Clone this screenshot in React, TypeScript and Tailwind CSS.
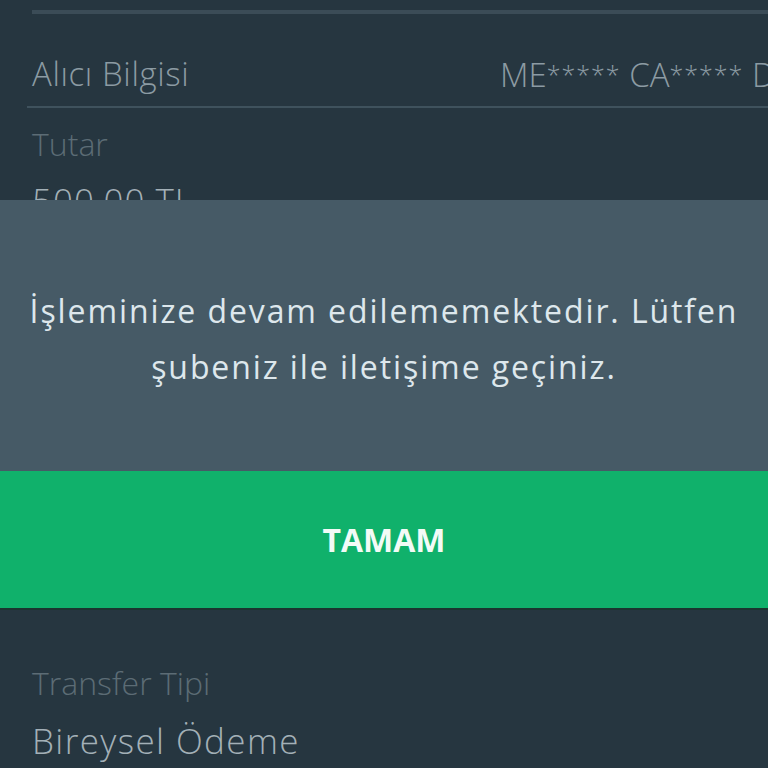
export default function App() {
  const font = { fontFamily: "'Open Sans', 'Noto Sans', sans-serif" };
  const stars = <span className="align-[3px] text-[25px] tracking-[1px]">*****</span>;
  return (
    <div className="relative h-[768px] w-[768px] overflow-hidden bg-[#263640]" style={font}>
      {/* background form */}
      <div className="flex flex-col">
        <div className="ml-[32px] mt-[10px] h-[4px] bg-[#3b4c57]" />
        <div className="mt-[40px] flex whitespace-nowrap pl-[32px] text-[33px] font-light leading-[40px] tracking-[0.6px] text-[#8c9ba3]">
          <span className="w-[468px] shrink-0">Alıcı Bilgisi</span>
          <span className="shrink-0 tracking-normal">
            ME{stars} CA{stars} D
          </span>
        </div>
        <div className="ml-[27px] mt-[11px] h-[2px] bg-[#3f525d]" />
        <div className="mt-[16px] pl-[32px] text-[32px] font-light leading-[40px] text-[#5c6c75]">Tutar</div>
        <div className="mt-[15px] pl-[32px] text-[35px] font-light leading-[44px] tracking-[1px] text-[#a3b0b7]">500,00 TL</div>
        <div className="mt-[440px] pl-[32px] text-[32px] font-light leading-[40px] text-[#5c6c75]">Transfer Tipi</div>
        <div className="mt-[16px] pl-[32px] text-[35px] font-light leading-[44px] tracking-[1.4px] text-[#a3b0b7]">Bireysel Ödeme</div>
      </div>

      {/* dialog */}
      <div className="absolute left-0 right-0 top-[200px] flex flex-col">
        <div className="flex h-[271px] flex-col items-center justify-center bg-[#465a66] pt-[6px] text-center text-[32px] leading-[56px] tracking-[1.9px] text-[#dde7ec]">
          <p className="whitespace-nowrap">İşleminize devam edilememektedir. Lütfen</p>
          <p className="whitespace-nowrap">şubeniz ile iletişime geçiniz.</p>
        </div>
        <button className="flex h-[137px] items-center justify-center bg-[#10b16b] text-[32px] font-bold text-[#f2fbf6]">
          TAMAM
        </button>
        <div className="h-[2px] bg-[#1b3530]" />
      </div>
    </div>
  );
}
